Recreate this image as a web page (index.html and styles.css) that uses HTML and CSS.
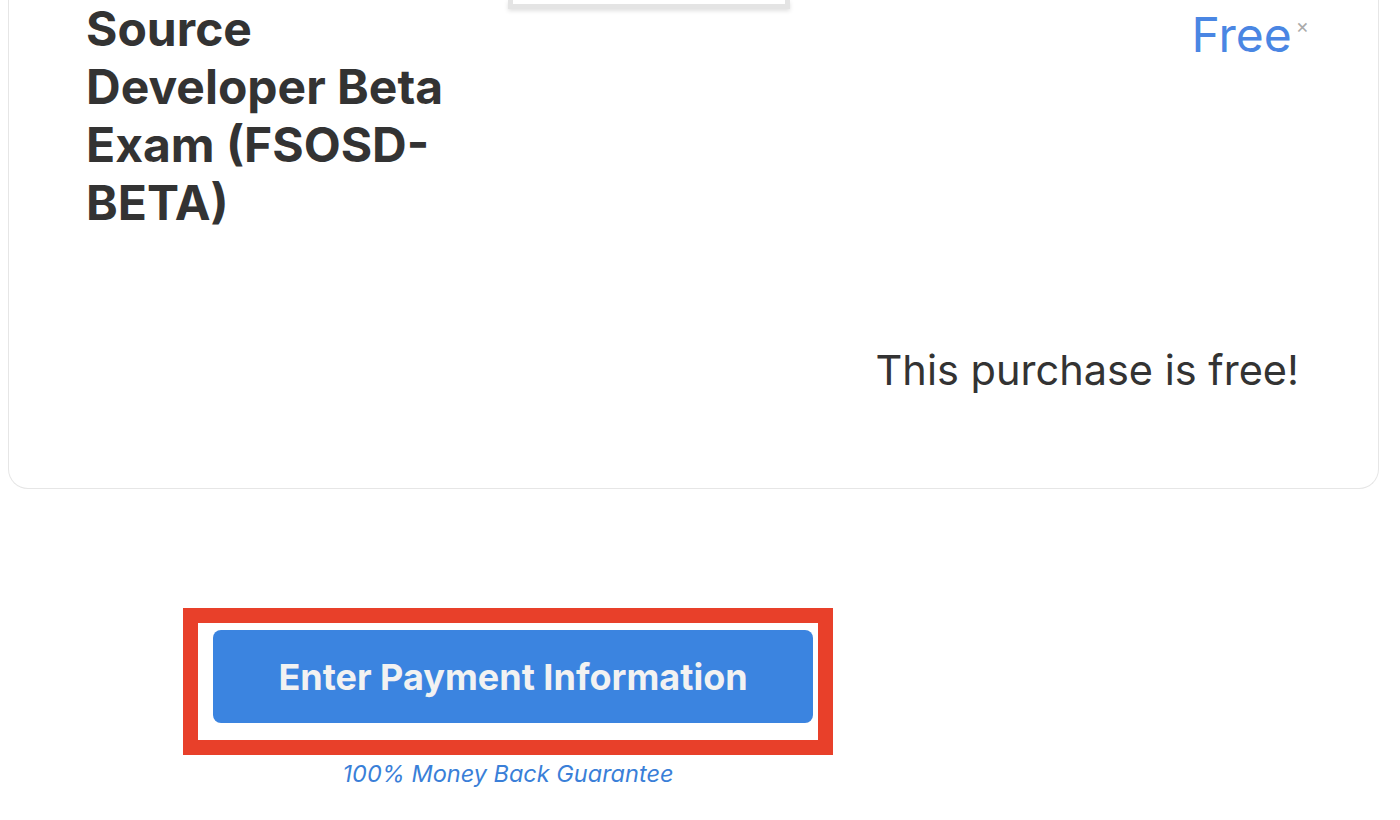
FILE: index.html
```html
<!DOCTYPE html>
<html lang="en">
<head>
  <meta charset="UTF-8">
  <meta name="viewport" content="width=device-width, initial-scale=1.0">
  <title>Checkout</title>
  <link rel="stylesheet" href="styles.css">
</head>
<body>
  <div class="cart-card">
    <div class="cart-row">
      <div class="product-title">Source Developer Beta Exam (FSOSD-BETA)</div>
      <div class="product-thumb"></div>
      <div class="product-price">
        <span class="price">Free</span><span class="remove">&times;</span>
      </div>
    </div>
    <div class="cart-note">This purchase is free!</div>
  </div>

  <div class="checkout">
    <div class="highlight">
      <button class="pay-button">Enter Payment Information</button>
    </div>
    <div class="guarantee">100% Money Back Guarantee</div>
  </div>
</body>
</html>
```

FILE: styles.css
```css
body {
  margin: 0;
  padding: 0;
  font-family: 'Inter', 'Noto Sans', sans-serif;
  color: #333;
  background: #fff;
}

.cart-card {
  margin-left: 8px;
  width: 1369px;
  border: 1.5px solid #e6e6e6;
  border-top: none;
  border-radius: 0 0 20px 20px;
  padding-bottom: 94px;
}

.cart-row {
  display: flex;
  align-items: flex-start;
}

.product-title {
  width: 380px;
  padding-left: 77px;
  font-size: 48px;
  line-height: 58px;
  font-weight: 700;
}

.product-thumb {
  margin-left: 42px;
  width: 272px;
  height: 4px;
  background: #fff;
  border: 5px solid #e4e4e4;
  border-top: none;
  box-shadow: 0 2px 4px rgba(0,0,0,0.12);
}

.product-price {
  flex: 1;
  display: flex;
  justify-content: flex-end;
  padding-top: 6px;
  padding-right: 69px;
}

.price {
  font-size: 48px;
  line-height: 58px;
  color: #4a86e3;
}

.remove {
  font-size: 20px;
  line-height: 20px;
  color: #aaa;
  margin-left: 4px;
  margin-top: 10px;
}

.cart-note {
  margin-top: 114px;
  padding-right: 79px;
  text-align: right;
  font-size: 41.5px;
  line-height: 48px;
}

.checkout {
  width: 650px;
  margin-top: 119px;
  margin-left: 183px;
  text-align: center;
}

.highlight {
  border: 15px solid #e8402a;
  padding: 7px 5px 17px 15px;
}

.pay-button {
  display: block;
  width: 600px;
  height: 93px;
  border: none;
  border-radius: 8px;
  background: #3b84e0;
  color: #f2f2f2;
  font-family: 'Inter', 'Noto Sans', sans-serif;
  font-size: 36px;
  font-weight: 700;
  cursor: pointer;
}

.guarantee {
  margin-top: 4px;
  font-size: 23.5px;
  line-height: 29px;
  font-style: italic;
  color: #3a7fd8;
}
```
